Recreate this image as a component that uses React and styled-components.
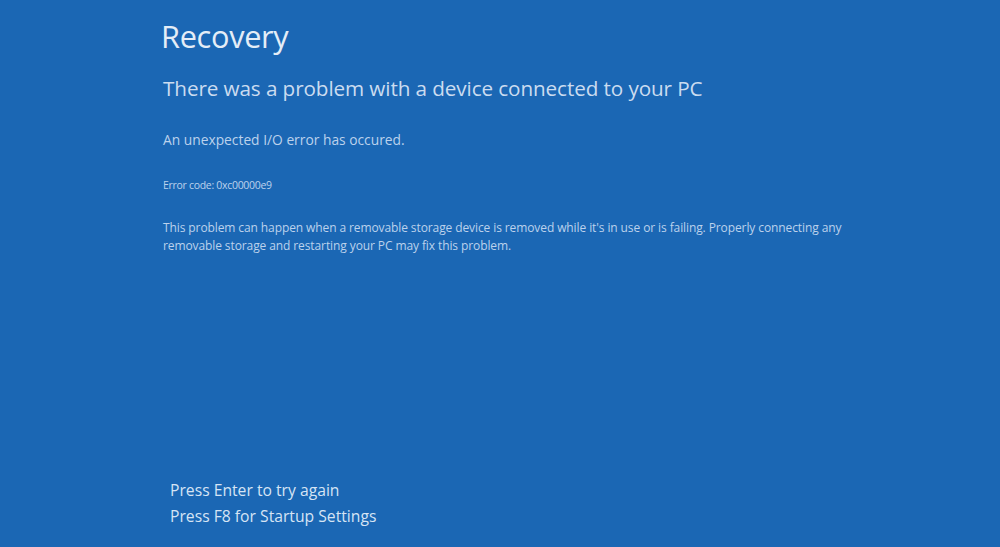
import React from "react";
import styled, { createGlobalStyle } from "styled-components";

const GlobalStyle = createGlobalStyle`
  html, body {
    margin: 0;
    padding: 0;
    background: #1b67b4;
  }
  body {
    font-family: "Open Sans", "Noto Sans", "Liberation Sans", sans-serif;
  }
`;

const Screen = styled.div`
  width: 1000px;
  height: 547px;
  background: #1b67b4;
  display: flex;
  flex-direction: column;
  box-sizing: border-box;
  padding: 16px 0 20px 0;
  overflow: hidden;
`;

const Main = styled.div`
  display: flex;
  flex-direction: column;
  padding-left: 161px;
`;

const Title = styled.h1`
  margin: 0;
  font-size: 30.7px;
  font-weight: 400;
  color: #e4edf7;
  letter-spacing: -0.3px;
  line-height: 40px;
`;

const Subtitle = styled.h2`
  margin: 17px 0 0 2px;
  font-size: 20.7px;
  font-weight: 400;
  color: #cbdcf0;
  line-height: 30px;
  letter-spacing: -0.1px;
`;

const Text = styled.p`
  margin: ${(p) => p.$top}px 0 0 2px;
  font-size: ${(p) => p.$size}px;
  line-height: ${(p) => p.$line || 18}px;
  color: #bcd2ec;
  letter-spacing: ${(p) => p.$spacing || 0}px;
  max-width: ${(p) => p.$max || 800}px;
`;

const Footer = styled.div`
  margin-top: auto;
  padding-left: 170px;
  display: flex;
  flex-direction: column;
  gap: 4px;
`;

const Hint = styled.div`
  font-size: 15.7px;
  line-height: 22px;
  color: #d6e4f4;
`;

export default function App() {
  return (
    <>
      <GlobalStyle />
      <Screen>
        <Main>
          <Title>Recovery</Title>
          <Subtitle>There was a problem with a device connected to your PC</Subtitle>
          <Text $top={28} $size={13.8}>
            An unexpected I/O error has occured.
          </Text>
          <Text $top={27} $size={10.5} $spacing={-0.3}>
            Error code: 0xc00000e9
          </Text>
          <Text $top={25} $size={12} $spacing={-0.1} $max={710}>
            This problem can happen when a removable storage device is removed
            while it's in use or is failing. Properly connecting any removable
            storage and restarting your PC may fix this problem.
          </Text>
        </Main>
        <Footer>
          <Hint>Press Enter to try again</Hint>
          <Hint>Press F8 for Startup Settings</Hint>
        </Footer>
      </Screen>
    </>
  );
}
